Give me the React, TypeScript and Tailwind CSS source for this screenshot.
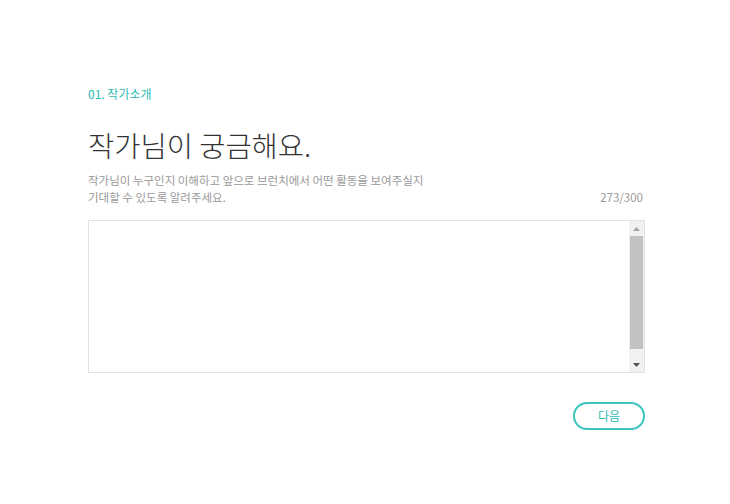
export default function App() {
  return (
    <div className="min-h-[504px] w-[730px] bg-white font-['Noto_Sans_CJK_KR','Noto_Sans',sans-serif]">
      <div className="ml-[88px] w-[557px] pt-[85px]">
        {/* Step label */}
        <p className="text-[12px] leading-[18px] text-[#2cbcb6]">01. 작가소개</p>

        {/* Heading */}
        <h1 className="mt-[23px] text-[28.5px] font-light leading-[38px] text-[#333]">
          작가님이 궁금해요.
        </h1>

        {/* Description + counter */}
        <div className="mt-[8px] flex items-end justify-between text-[11.5px] leading-[17px] text-[#999]">
          <p>
            작가님이 누구인지 이해하고 앞으로 브런치에서 어떤 활동을 보여주실지
            <br />
            기대할 수 있도록 알려주세요.
          </p>
          <span className="mr-[2px]">273/300</span>
        </div>

        {/* Text box with scrollbar */}
        <div className="mt-[14px] flex h-[153px] border border-[#e1e1e1] bg-white">
          <textarea className="flex-1 resize-none overflow-hidden p-3 text-[13px] outline-none" />
          <div className="flex w-[15px] flex-col bg-[#f1f1f1]">
            <div className="flex h-[15px] items-center justify-center">
              <svg width="7" height="4" viewBox="0 0 7 4">
                <polygon points="3.5,0 7,4 0,4" fill="#a3a3a3" />
              </svg>
            </div>
            <div className="mx-[1px] h-[113px] bg-[#c1c1c1]" />
            <div className="flex-1" />
            <div className="flex h-[15px] items-center justify-center">
              <svg width="7" height="4" viewBox="0 0 7 4">
                <polygon points="0,0 7,0 3.5,4" fill="#505050" />
              </svg>
            </div>
          </div>
        </div>

        {/* Next button */}
        <div className="mt-[29px] flex justify-end">
          <button className="h-[28px] w-[72px] rounded-full border-2 border-[#3cc4bf] text-[12px] text-[#2cbcb6]">
            다음
          </button>
        </div>
      </div>
    </div>
  );
}
